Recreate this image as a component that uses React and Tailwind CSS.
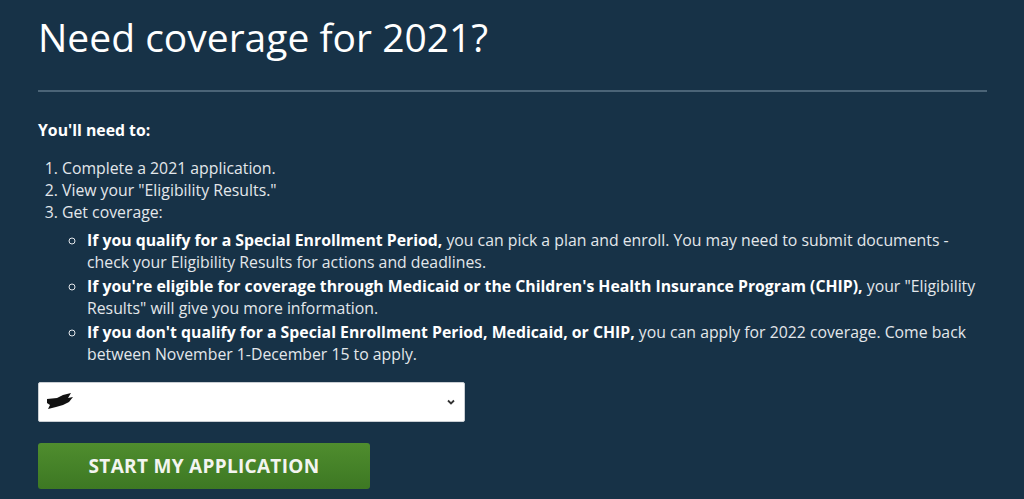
import React from "react";

const App = () => {
  return (
    <div
      className="w-[1024px] h-[499px] overflow-hidden bg-[#173247] text-[#e3e7eb]"
      style={{ fontFamily: '"Open Sans", sans-serif' }}
    >
      <div className="pl-[38px] pr-[37px] pt-[9px]">
        <h1 className="text-[39px] leading-[56px] text-white font-normal">
          Need coverage for 2021?
        </h1>
        <div className="mt-[25px] h-[2px] bg-[#4b6477]" />

        <p className="mt-[27px] text-[15.8px] leading-[22px] font-bold text-white">
          You'll need to:
        </p>

        <ol className="mt-[16px] text-[15.8px] leading-[22px] list-decimal pl-[24px]">
          <li>Complete a 2021 application.</li>
          <li>View your "Eligibility Results."</li>
          <li>
            Get coverage:
            <ul className="list-[circle] pl-[25px] mt-[6px] flex flex-col gap-[2px]">
              <li>
                <b className="text-white">If you qualify for a Special Enrollment Period,</b> you
                can pick a plan and enroll. You may need to submit documents - check your
                Eligibility Results for actions and deadlines.
              </li>
              <li>
                <b className="text-white">
                  If you're eligible for coverage through Medicaid or the Children's Health
                  Insurance Program (CHIP),
                </b>{" "}
                your "Eligibility Results" will give you more information.
              </li>
              <li>
                <b className="text-white">
                  If you don't qualify for a Special Enrollment Period, Medicaid, or CHIP,
                </b>{" "}
                you can apply for 2022 coverage. Come back between November 1-December 15 to
                apply.
              </li>
            </ul>
          </li>
        </ol>

        <div className="mt-[17px] w-[427px] h-[40px] bg-white border border-[#c9ced3] rounded-[2px] flex items-center justify-between pl-[6px] pr-[8px]">
          <svg width="30" height="20" viewBox="0 0 30 20">
            <path
              d="M2 7 L12 6 L18 3 L26 1 L23 6 L28 5 L24 10 L18 13 L11 15 L3 17 L5 13 L2 11 Z"
              fill="#111"
            />
          </svg>
          <svg width="10" height="10" viewBox="0 0 10 10">
            <path d="M2 3.5 L5 6.5 L8 3.5" stroke="#333" strokeWidth="1.8" fill="none" />
          </svg>
        </div>

        <button className="mt-[21px] w-[332px] h-[46px] rounded-[3px] bg-gradient-to-b from-[#4f8d2e] to-[#3d7823] text-[#f3f5f0] text-[19px] font-bold tracking-[0.3px] flex items-center justify-center">
          START MY APPLICATION
        </button>
      </div>
    </div>
  );
};

export default App;
